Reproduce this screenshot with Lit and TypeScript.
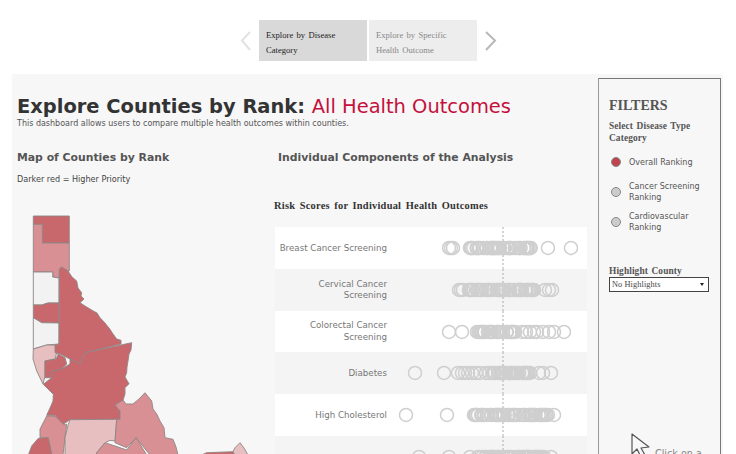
import { LitElement, html, css, svg } from "lit";
import { customElement } from "lit/decorators.js";

type Shape = { fill: string; pts: string };
const DARK = "#c9686c", MID = "#d99094", LIGHT = "#e8bfc0", NONE = "#f2f2f2";
const shapes: Shape[] = [
  { fill: DARK, pts: "33.3,215 69.3,215 69.3,242 42.3,242 42.3,223.3 33.3,223.3" },
  { fill: MID, pts: "33.3,223.3 42.3,223.3 42.3,242 69.3,242 69.3,270 60,267 59,277 52.7,275.7 52.7,271 33.3,271" },
  { fill: NONE, pts: "33.3,271 52.7,271 52.7,276 59,277 59,302 48,302 41.7,304 33.3,304" },
  { fill: DARK, pts: "33.3,304 41.7,304 48,302 59,302 59,322 41.7,321.7 33.3,316.7" },
  { fill: NONE, pts: "33.3,316.7 41.7,321.7 59,322 59,343 46.7,344 33.3,348" },
  { fill: LIGHT, pts: "33.3,348 46.7,344 56,344 56.7,351.7 55,358 45,360 45,375 43,383 36.7,370 33,358" },
  { fill: DARK, pts: "59.3,268.3 61.7,266 68,270 72,276 76.7,280 78,287 81.7,291.7 81,295 84,298 80,301.7 85,305 93.3,310 97,312 100,316.7 105,322 110,328.3 113,333 116.7,338 121,339.3 121,343 85,351.7 80,362.7 70,358 60,353 55,351.7 55,344 59,343" },
  { fill: DARK, pts: "131.7,341.7 131,349 129,353 128,360 127,366 126.7,371.7 125,376 129,382.7 125,386.7 125,393 123,399.3 115,404 120,410 120,418.3 70,418.7 63,423.3 55,414.3 46.7,414.3 50,407 53,400 53.3,393.3 47,387 43.3,383.3 51.7,376.7 51.7,370 61.7,368 70,363 70,358 80,362.7 85,351.7" },
  { fill: DARK, pts: "45,360 56,358 58.3,353 65,356.7 66.7,363 61.7,368 51.7,370 51.7,376.7 45,376.7" },
  { fill: MID, pts: "46.7,415 55,415 63.3,423.3 66.7,423.3 65,436 63,454 51.7,454 48.3,437.3 40,436.7 40,428" },
  { fill: DARK, pts: "38.3,437.3 48.3,436.7 51.7,454 28.3,454 31.7,445" },
  { fill: LIGHT, pts: "68.3,423.3 70,418.7 116.7,418.3 115,440 110,439.3 105,441.7 96.7,451.7 96.7,454 65,454 65,436.7" },
  { fill: MID, pts: "120,418.3 120,410 115,404 123,399 126,403 133,403 140,397 145,391.7 151.7,400 153,408 156.7,413 160,420 164,426.7 165,436.7 173,438.3 176,446 178,454 150,454 136,436.7 126.7,446.7 115,441.7 116.7,418.3" },
  { fill: MID, pts: "96.7,451.7 105,441.7 115,445 126.7,449 136,436.7 146.7,454 96.7,454" },
  { fill: DARK, pts: "203,453.3 206.7,451.7 233,450.7 235,454 203,454" },
  { fill: LIGHT, pts: "233,450.7 235,446.7 240,441.7 244,447 248,454 235,454" },
];

function band(from: number, to: number, seed: number): number[] {
  const out: number[] = [];
  let x = from, s = seed;
  while (x <= to) {
    out.push(x);
    s = (s * 73 + 41) % 101;
    x += s % 5 === 0 ? 3.2 : 0.7 + (s % 3) * 0.4;
  }
  return out;
}

const rows: { label: string[]; cx: number[]; alt: boolean }[] = [
  { label: ["Breast Cancer Screening"], alt: false, cx: [449, 451, 453, 548, 571, ...band(470, 533, 3)] },
  { label: ["Cervical Cancer", "Screening"], alt: true, cx: [459, 461, 463, 545, 549, 552, ...band(469, 537, 11)] },
  { label: ["Colorectal Cancer", "Screening"], alt: false, cx: [449, 462, 564, ...band(477, 516, 7), 522, 526, 530, 534, 537, 543, 549, 554] },
  { label: ["Diabetes"], alt: true, cx: [415, 444, 458, 462, 465, 468, 472, 476, 480, ...band(486, 532, 17), 539, 543, 551] },
  { label: ["High Cholesterol"], alt: false, cx: [406, 447, ...band(474, 548, 23), 554] },
  { label: [], alt: true, cx: [419, 449, 470, ...band(478, 545, 29), 551] },
];

const PLOT_X = 387;

@customElement("app-root")
export class AppRoot extends LitElement {
  static styles = css`
    :host { display: block; width: 736px; height: 454px; overflow: hidden; background: #fff; font-family: "DejaVu Sans", sans-serif; }
    .nav { height: 74px; display: flex; align-items: flex-start; justify-content: center; gap: 2px; padding: 20px 0 0 0; box-sizing: border-box; }
    .arrow { width: 18px; height: 41px; display: block; }
    .tab { width: 108px; height: 41px; box-sizing: border-box; padding: 8px 7px 0; background: #d9d9d9; color: #222; }
    .tab.off { background: #ededed; color: #888; }
    .tabtext { height: 27px; overflow: hidden; font: 8.6px/15px "Liberation Serif", serif; word-spacing: 1.2px; }
    .main { margin: 0 13px 0 12px; height: 380px; background: #f7f7f7; display: flex; }
    .content { width: 585px; flex: none; padding: 20px 0 0 5px; box-sizing: border-box; }
    h1 { margin: 0; font-size: 19.45px; line-height: 26px; font-weight: 700; color: #333; white-space: nowrap; }
    h1 span { font-weight: 400; color: #c4103c; }
    .sub { font-size: 8px; line-height: 10px; color: #555; margin-top: -1px; }
    .cols { display: flex; margin-top: 22px; }
    .mapcol { width: 258px; flex: none; }
    .chartcol { width: 312px; flex: none; }
    h2 { margin: 0; font-size: 10.85px; line-height: 14px; font-weight: 700; color: #555; white-space: nowrap; }
    .chartcol h2 { margin-left: 3px; }
    .legend { font-size: 8.1px; line-height: 10px; color: #444; margin-top: 9px; }
    .map { display: block; width: 258px; height: 249px; margin: 22px 0 0 -5px; overflow: hidden; }
    h3 { margin: 34px 0 0 -1px; font: bold 10.4px/14px "Liberation Serif", serif; color: #333; letter-spacing: 0.25px; word-spacing: 1.6px; white-space: nowrap; }
    .rows { margin-top: 14px; }
    .row { display: flex; align-items: center; height: 41.8px; background: #fff; }
    .row.alt { background: #f4f4f4; }
    .label { width: 112px; flex: none; box-sizing: border-box; padding-top: 1px; text-align: right; font-size: 8.7px; line-height: 11.5px; color: #777; white-space: nowrap; }
    .plot { display: block; width: 200px; height: 41.8px; flex: none; }
    .filters { width: 123px; height: 380px; flex: none; margin: 4px 0 0 1px; box-sizing: border-box; border: 1px solid #777; border-left-color: #999; border-bottom: 0; padding: 19px 10px 0; overflow: hidden; }
    .ftitle { font: bold 14px/16px "Liberation Serif", serif; color: #555; }
    .flabel { font: bold 9.4px/12px "Liberation Serif", serif; color: #555; word-spacing: 1.1px; letter-spacing: 0.1px; }
    .fsel { margin-top: 6px; width: 90px; }
    .radios { margin-top: 3px; display: flex; flex-direction: column; }
    .radio { display: flex; align-items: center; gap: 8px; min-height: 30px; font-size: 8px; line-height: 11px; color: #555; }
    .dot { flex: none; border-radius: 50%; background: #ccc; border: 1px solid #888; margin-left: 2px; width: 8px; height: 8px; }
    .dot.on { background: #c0444e; }
    .hl { margin-top: 28px; }
    .select { box-sizing: border-box; width: 100px; height: 15px; background: #fff; border: 1px solid #444; display: flex; align-items: center; justify-content: space-between; padding: 0 4px 0 2px; font: 8.3px/12px "Liberation Serif", serif; color: #444; letter-spacing: 0.1px; }
    .caret { width: 0; height: 0; border-left: 2.5px solid transparent; border-right: 2.5px solid transparent; border-top: 3px solid #222; }
    .hint { display: flex; align-items: flex-start; gap: 4px; margin: 141px 0 0 22px; height: 30px; }
    .cursor { display: block; width: 20px; height: 24px; flex: none; }
    .hint span { font-size: 9.6px; line-height: 12px; color: #888; white-space: nowrap; margin-top: 15px; }
  `;

  render() {
    return html`
      <div class="nav">
        <svg class="arrow" viewBox="0 0 18 41"><path d="M11 12 L3 20.5 L11 30" fill="none" stroke="#e2e2e2" stroke-width="2"/></svg>
        <div class="tab"><div class="tabtext">Explore by Disease<br>Category</div></div>
        <div class="tab off"><div class="tabtext">Explore by Specific<br>Health Outcome</div></div>
        <svg class="arrow" viewBox="0 0 18 41"><path d="M7 12 L16 20.5 L7 30" fill="none" stroke="#b8b8b8" stroke-width="2"/></svg>
      </div>
      <div class="main">
        <div class="content">
          <h1>Explore Counties by Rank: <span>All Health Outcomes</span></h1>
          <div class="sub">This dashboard allows users to compare multiple health outcomes within counties.</div>
          <div class="cols">
            <div class="mapcol">
              <h2>Map of Counties by Rank</h2>
              <div class="legend">Darker red = Higher Priority</div>
              <svg class="map" viewBox="12 205 258 249">
                ${shapes.map(s => svg`<polygon points=${s.pts} fill=${s.fill} stroke="#8f8484" stroke-width="0.9" stroke-linejoin="round"/>`)}
              </svg>
            </div>
            <div class="chartcol">
              <h2>Individual Components of the Analysis</h2>
              <h3>Risk Scores for Individual Health Outcomes</h3>
              <div class="rows">
                ${rows.map(r => html`
                  <div class="row ${r.alt ? "alt" : ""}">
                    <div class="label">${r.label.map(l => html`<div>${l}</div>`)}</div>
                    <svg class="plot" viewBox="0 0 200 41.8">
                      <line x1=${503 - PLOT_X} x2=${503 - PLOT_X} y1="0" y2="41.8" stroke="#aaa" stroke-width="1" stroke-dasharray="2 2"/>
                      ${r.cx.map(c => svg`<circle cx=${c - PLOT_X} cy="21" r="6.5" fill="none" stroke="#cfcfcf" stroke-width="1.5"/>`)}
                    </svg>
                  </div>`)}
              </div>
            </div>
          </div>
        </div>
        <div class="filters">
          <div class="ftitle">FILTERS</div>
          <div class="flabel fsel">Select Disease Type Category</div>
          <div class="radios">
            <div class="radio"><i class="dot on"></i><div>Overall Ranking</div></div>
            <div class="radio"><i class="dot"></i><div>Cancer Screening<br>Ranking</div></div>
            <div class="radio"><i class="dot"></i><div>Cardiovascular<br>Ranking</div></div>
          </div>
          <div class="flabel hl">Highlight County</div>
          <div class="select"><span>No Highlights</span><i class="caret"></i></div>
          <div class="hint">
            <svg class="cursor" viewBox="0 0 20 24"><path d="M1 1 L1 21 L6 16 L10 24 L14 22 L10 15 L18 14 Z" fill="none" stroke="#555" stroke-width="1.2" stroke-linejoin="round"/></svg>
            <span>Click on a</span>
          </div>
        </div>
      </div>
    `;
  }
}
